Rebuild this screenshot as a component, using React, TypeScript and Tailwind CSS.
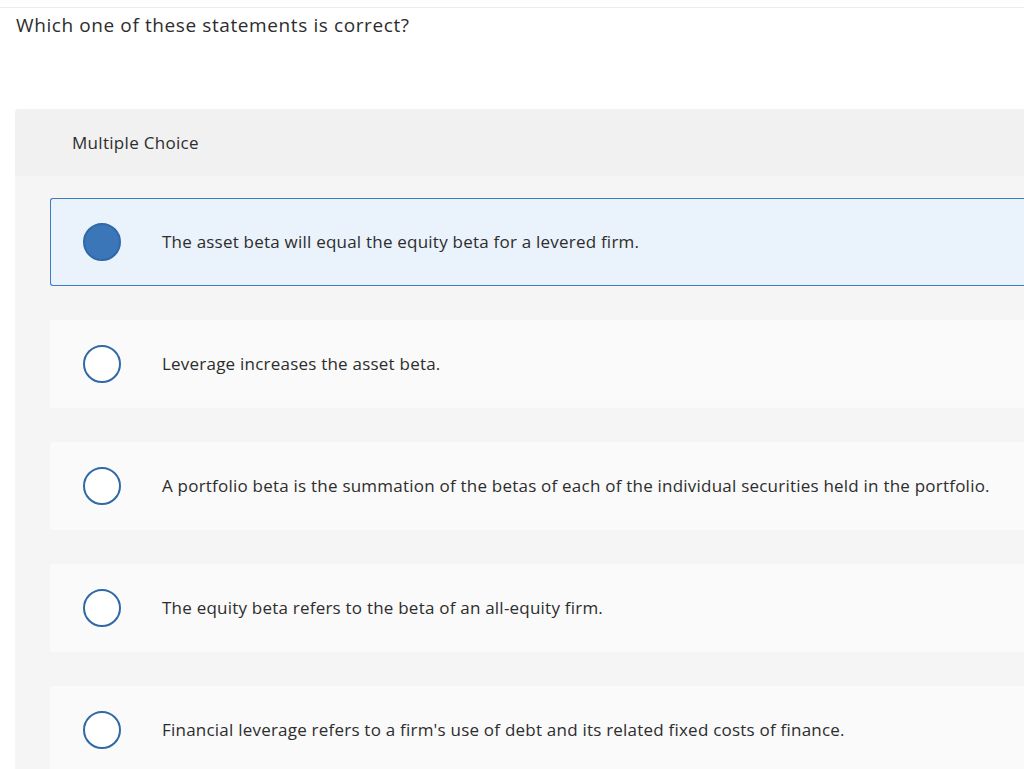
const options = [
  "The asset beta will equal the equity beta for a levered firm.",
  "Leverage increases the asset beta.",
  "A portfolio beta is the summation of the betas of each of the individual securities held in the portfolio.",
  "The equity beta refers to the beta of an all-equity firm.",
  "Financial leverage refers to a firm's use of debt and its related fixed costs of finance.",
];

export default function App() {
  const selected = 0;
  return (
    <div className="min-h-screen bg-white font-['Open_Sans',sans-serif] text-[#2d2d2d] overflow-hidden">
      <div className="h-2 border-b border-[#ececec]" />
      <div className="px-4 pt-[5px] text-[19px] leading-6 tracking-[0.6px]">
        Which one of these statements is correct?
      </div>
      <div className="ml-[15px] mt-[72px] rounded-tl bg-[#f5f5f5]">
        <div className="h-[67px] bg-[#f1f1f1] pl-[57px] flex items-center text-[17px] tracking-[0.3px] rounded-tl">
          Multiple Choice
        </div>
        <div className="pl-[35px] pt-[22px] flex flex-col gap-[34px]">
          {options.map((text, i) => {
            const isSel = i === selected;
            return (
              <div
                key={i}
                className={
                  isSel
                    ? "h-[88px] flex items-center rounded-l-[3px] border border-r-0 border-[#3d7bc0] bg-[#eaf2fb]"
                    : "h-[88px] flex items-center rounded-l-[3px] border border-r-0 border-transparent bg-[#fafafa]"
                }
              >
                <div className="w-[111px] pl-[32px] flex items-center">
                  <span
                    className={
                      isSel
                        ? "block w-[38px] h-[38px] rounded-full border-2 border-[#2f69a8] bg-[#3a76b8]"
                        : "block w-[38px] h-[38px] rounded-full border-2 border-[#2f69a8] bg-white"
                    }
                  />
                </div>
                <span className="text-[17px] tracking-[0.22px]">{text}</span>
              </div>
            );
          })}
        </div>
      </div>
    </div>
  );
}
